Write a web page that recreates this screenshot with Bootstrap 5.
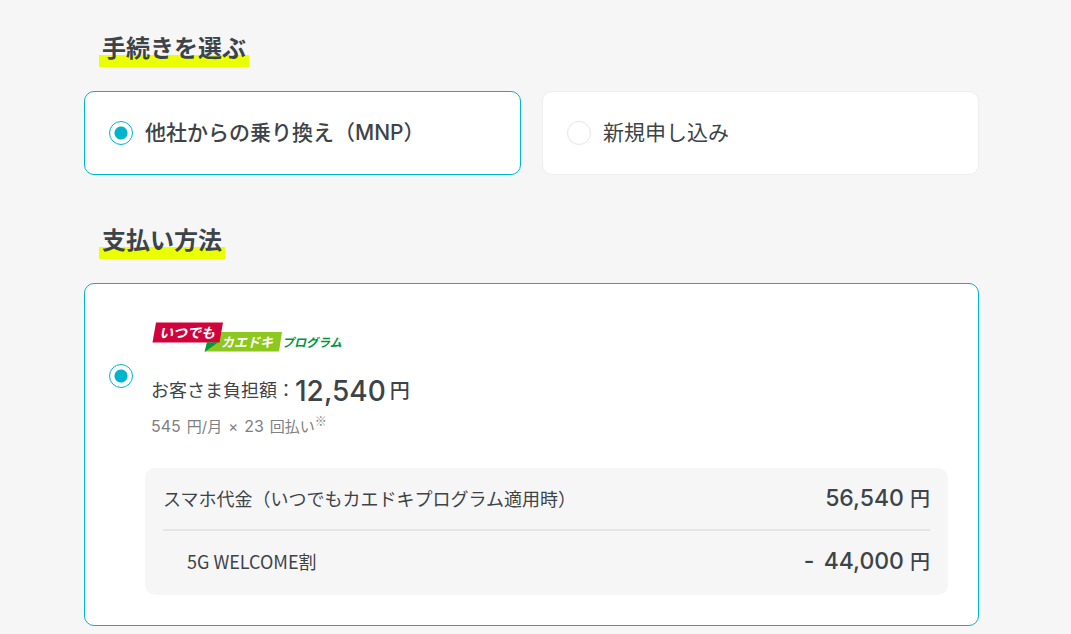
<!DOCTYPE html>
<html lang="ja">
<head>
<meta charset="utf-8">
<meta name="viewport" content="width=device-width, initial-scale=1">
<title>手続きを選ぶ</title>
<link href="https://cdn.jsdelivr.net/npm/bootstrap@5.3.0/dist/css/bootstrap.min.css" rel="stylesheet">
<style>
body { background: #f6f6f6; color: #3d4448; font-family: Inter, "Noto Sans CJK JP", sans-serif; }
.order { padding: 30px 92px 8px 84px; }
.marked { font-size: 24px; line-height: 37px; font-weight: 700; padding: 0 3px; margin: 0 0 24px 15px; background: linear-gradient(#eaff00, #eaff00) left bottom / 100% 12px no-repeat; }
.choice { background: #fff; border: 1px solid #eee; border-radius: 10px; }
.choice:has(> label > input:checked) { border-color: #00b4cd; }
.choice-short { font-size: 21px; line-height: 34px; font-weight: 500; }
.choice-short label { padding: 24px; }
.choice-plain { font-weight: 400; }
.choices { gap: 21px; margin-bottom: 47px; }
.pick { gap: 12px; cursor: pointer; }
.pick .form-check-input { width: 24px; height: 24px; margin: 0; border: 1px solid #e6e6e6; background-color: #fff; }
.pick .form-check-input:checked { border-color: #00b4cd; background-image: radial-gradient(circle, #00b4cd 6px, transparent 7px); }
.payment { padding: 27px 30px 30px 24px; }
.plan { padding: 11px 6px 0; }
.plan-logo { margin-bottom: 20px; }
.price { font-size: 18px; line-height: 38px; }
.price strong { font-size: 28px; font-weight: 500; }
.yen { font-size: 20px; font-weight: 500; }
.price .yen { margin-left: 4px; }
.note { gap: 6px; padding-top: 3px; font-size: 16px; line-height: 26px; color: #808080; }
.note span { font-size: 15px; }
.note sup { font-family: "Noto Sans CJK JP", sans-serif; font-size: 12px; line-height: 0; top: -6px; }
.costs { background: #f6f6f6; border-radius: 10px; margin: 28px 0 0 36px; padding: 0 18px 4px; }
.costs table { font-family: "Noto Sans CJK JP", sans-serif; font-size: 18px; color: inherit; }
.costs th { font-weight: 400; }
.costs th, .costs td { height: 62px; padding: 0; vertical-align: middle; }
.costs tr + tr th, .costs tr + tr td { height: 61px; border-top: 2px solid #e6e6e6; }
.costs tr + tr th { padding-left: 24px; }
.amount { font-family: Inter, sans-serif; font-size: 23px; font-weight: 500; margin-right: 2px; }
.minus { margin-right: 3px; }
</style>
</head>
<body>
<main class="order">
  <h2 class="marked d-table">手続きを選ぶ</h2>
  <div class="choices d-flex">
    <div class="choice choice-short flex-fill w-50">
      <label class="pick d-flex align-items-center" for="mnp">
        <input class="form-check-input flex-shrink-0" type="radio" name="procedure" id="mnp" checked>
        <span>他社からの乗り換え（MNP）</span>
      </label>
    </div>
    <div class="choice choice-short choice-plain flex-fill w-50">
      <label class="pick d-flex align-items-center" for="fresh">
        <input class="form-check-input flex-shrink-0" type="radio" name="procedure" id="fresh">
        <span>新規申し込み</span>
      </label>
    </div>
  </div>

  <h2 class="marked d-table">支払い方法</h2>
  <div class="choice payment">
    <label class="pick d-flex align-items-center" for="kaedoki">
      <input class="form-check-input flex-shrink-0" type="radio" name="payment" id="kaedoki" checked>
      <span class="plan d-block">
        <svg class="plan-logo d-block" width="194" height="30" viewBox="0 0 194 30" role="img" aria-label="いつでもカエドキプログラム">
          <path d="M58 10H131L128 29.500H54Z" fill="#8dc81e"/>
          <path d="M5 .5H72L68.500 20.500H1.500Z" fill="#d0043c"/>
          <path d="M56 20.500H67L53.500 30Z" fill="#00963f"/>
          <g font-family="Noto Sans CJK JP, sans-serif" font-weight="700" font-style="italic">
            <text x="8" y="15.500" font-size="14" fill="#fff">いつでも</text>
            <text x="70" y="25" font-size="13" fill="#fff">カエドキ</text>
            <text x="131" y="24.500" font-size="12" fill="#00963f">プログラム</text>
          </g>
        </svg>
        <span class="price d-flex align-items-center"><span>お客さま負担額：</span><strong>12,540</strong><span class="yen">円</span></span>
        <span class="note d-flex align-items-baseline">545 <span>円/月</span> <span>×</span> <b class="fw-normal">23</b> <span>回払い<sup>※</sup></span></span>
      </span>
    </label>
    <div class="costs">
      <table class="w-100">
        <tbody>
          <tr><th scope="row">スマホ代金（いつでもカエドキプログラム適用時）</th><td class="text-end"><span class="amount">56,540</span> <span class="yen">円</span></td></tr>
          <tr><th scope="row">5G WELCOME割</th><td class="text-end"><span class="amount"><span class="minus">-</span> 44,000</span> <span class="yen">円</span></td></tr>
        </tbody>
      </table>
    </div>
  </div>
</main>
<script src="https://cdn.jsdelivr.net/npm/bootstrap@5.3.0/dist/js/bootstrap.bundle.min.js"></script>
</body>
</html>
